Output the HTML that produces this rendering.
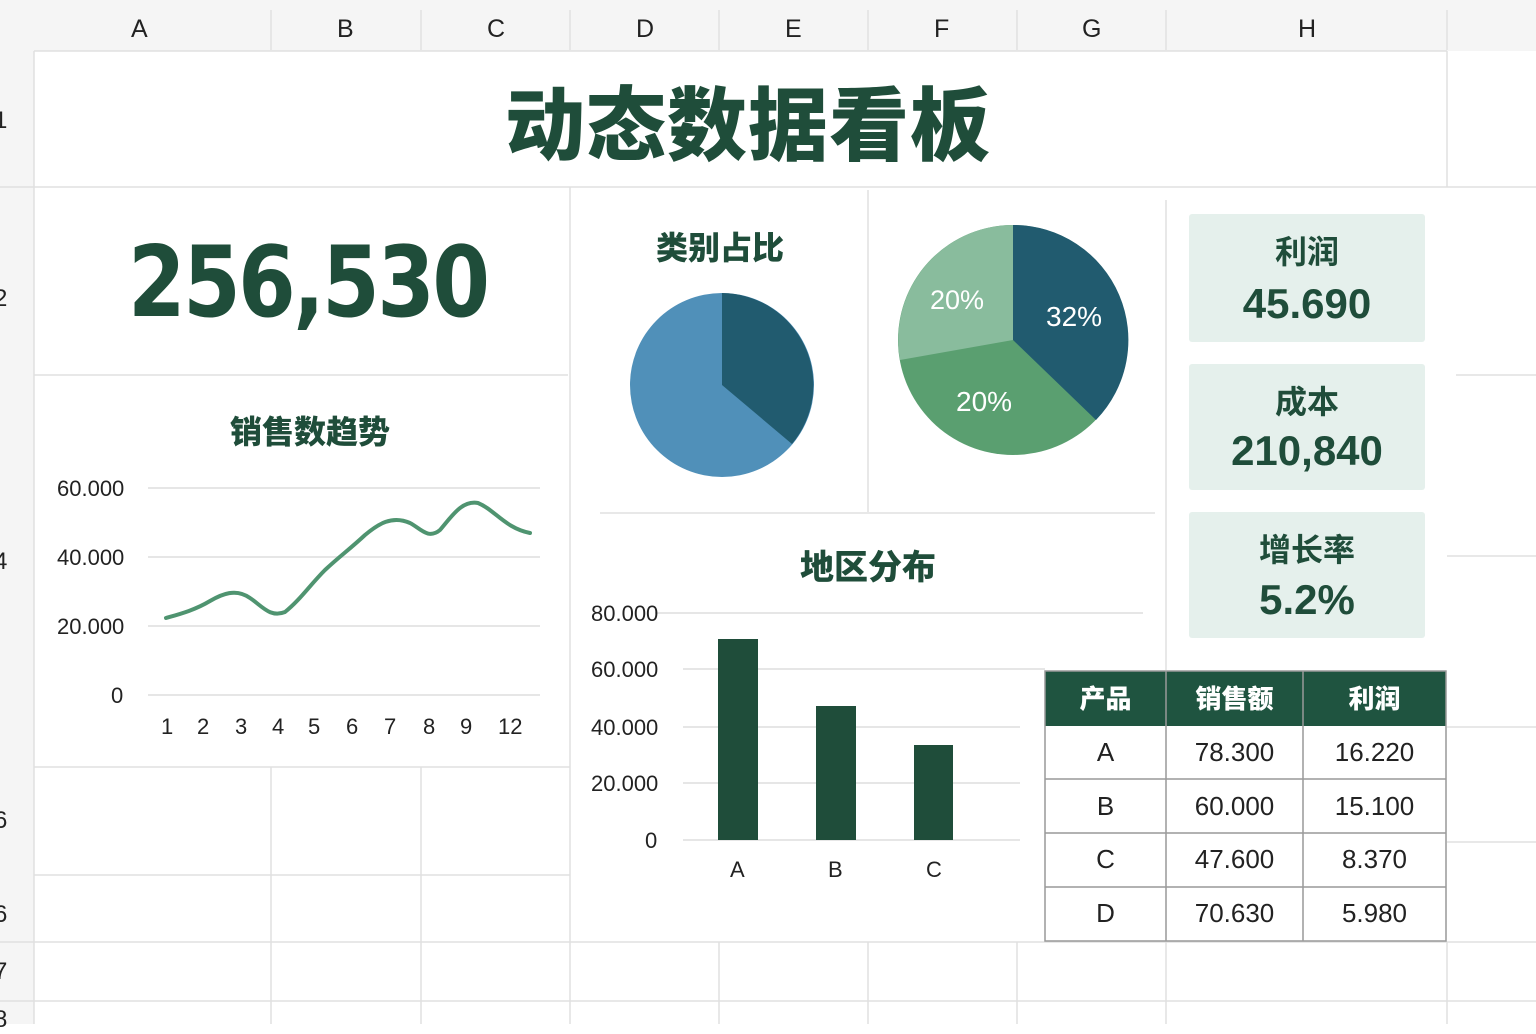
<!DOCTYPE html>
<html><head><meta charset="utf-8"><style>
body{margin:0;width:1536px;height:1024px;overflow:hidden;background:#fff;font-family:"Liberation Sans","Noto Sans CJK SC",sans-serif;position:relative}
.t{position:absolute;white-space:nowrap}
.cj{font-family:"Noto Sans CJK SC",sans-serif;font-weight:900;color:#1f4d3a}
.n{color:#222}
</style></head><body>
<svg width="1536" height="1024" style="position:absolute;left:0;top:0">
<rect x="0" y="0" width="1536" height="51" fill="#f5f5f5"/>
<rect x="0" y="0" width="34" height="1024" fill="#f5f5f5"/>
<g stroke="#e0e0e0" stroke-width="1.5">
<line x1="271" y1="10" x2="271" y2="50"/><line x1="421" y1="10" x2="421" y2="50"/><line x1="570" y1="10" x2="570" y2="50"/><line x1="719" y1="10" x2="719" y2="50"/><line x1="868" y1="10" x2="868" y2="50"/><line x1="1017" y1="10" x2="1017" y2="50"/><line x1="1166" y1="10" x2="1166" y2="50"/><line x1="1447" y1="10" x2="1447" y2="50"/>
<line x1="34" y1="51" x2="1447" y2="51"/>
<line x1="34" y1="51" x2="34" y2="1024"/>
<line x1="0" y1="187" x2="1536" y2="187"/>
<line x1="34" y1="375" x2="568" y2="375"/><line x1="1456" y1="375" x2="1536" y2="375"/>
<line x1="570" y1="187" x2="570" y2="1024"/>
<line x1="868" y1="190" x2="868" y2="512"/>
<line x1="1166" y1="200" x2="1166" y2="670"/>
<line x1="1447" y1="51" x2="1447" y2="187"/>
<line x1="600" y1="513" x2="1155" y2="513"/>
<line x1="34" y1="767" x2="570" y2="767"/>
<line x1="271" y1="767" x2="271" y2="1024"/><line x1="421" y1="767" x2="421" y2="1024"/>
<line x1="34" y1="875" x2="570" y2="875"/>
<line x1="0" y1="942" x2="1536" y2="942"/>
<line x1="0" y1="1001" x2="1536" y2="1001"/>
<line x1="719" y1="942" x2="719" y2="1024"/><line x1="868" y1="942" x2="868" y2="1024"/><line x1="1017" y1="942" x2="1017" y2="1024"/><line x1="1166" y1="942" x2="1166" y2="1024"/><line x1="1447" y1="942" x2="1447" y2="1024"/>
<line x1="1447" y1="556" x2="1536" y2="556"/><line x1="1447" y1="727" x2="1536" y2="727"/><line x1="1447" y1="842" x2="1536" y2="842"/>
</g>
<g stroke="#ddd" stroke-width="1.5">
<line x1="148" y1="488" x2="540" y2="488"/><line x1="148" y1="557" x2="540" y2="557"/><line x1="148" y1="626" x2="540" y2="626"/><line x1="148" y1="695" x2="540" y2="695"/>
<line x1="655" y1="613" x2="1143" y2="613"/><line x1="683" y1="669" x2="1045" y2="669"/><line x1="683" y1="727" x2="1020" y2="727"/><line x1="683" y1="783" x2="1020" y2="783"/><line x1="683" y1="840" x2="1020" y2="840"/>
</g>
<path d="M166,618 C180,614 195,610 210,601 C222,594 236,588 250,598 C262,606 270,618 285,612 C300,600 310,585 325,570 C340,556 350,549 365,535 C378,524 392,515 410,523 C420,528 428,540 440,530 C452,516 462,500 478,503 C495,510 505,528 530,533" fill="none" stroke="#4f9470" stroke-width="4" stroke-linecap="round"/>
<circle cx="722" cy="385" r="92" fill="#5090b9"/>
<path d="M722,385 L722,293 A92,92 0 0 1 792,444 Z" fill="#215b6f"/>
<circle cx="1013" cy="340" r="115" fill="#5a9f70"/>
<path d="M1013,340 L1013,225 A115,115 0 0 1 1096,420 Z" fill="#215b6f"/>
<path d="M1013,340 L900,360 A115,115 0 0 1 1013,225 Z" fill="#89bc9d"/>
<g fill="#1f4d3a"><rect x="718" y="639" width="40" height="201"/><rect x="816" y="706" width="40" height="134"/><rect x="914" y="745" width="39" height="95"/></g>
<g fill="#e5f0ec"><rect x="1189" y="214" width="236" height="128" rx="3"/><rect x="1189" y="364" width="236" height="126" rx="3"/><rect x="1189" y="512" width="236" height="126" rx="3"/></g>
<rect x="1045" y="671" width="401" height="55" fill="#1f5440"/>
<g stroke="#999" stroke-width="1.5" fill="none">
<rect x="1045" y="671" width="401" height="270"/>
<line x1="1045" y1="779" x2="1446" y2="779"/><line x1="1045" y1="833" x2="1446" y2="833"/><line x1="1045" y1="887" x2="1446" y2="887"/>
<line x1="1166" y1="671" x2="1166" y2="941"/><line x1="1303" y1="671" x2="1303" y2="941"/>
</g>
</svg>
<div class="t n" style="left:131px;top:15px;font-size:25px">A</div>
<div class="t n" style="left:337px;top:15px;font-size:25px">B</div>
<div class="t n" style="left:487px;top:15px;font-size:25px">C</div>
<div class="t n" style="left:636px;top:15px;font-size:25px">D</div>
<div class="t n" style="left:785px;top:15px;font-size:25px">E</div>
<div class="t n" style="left:934px;top:15px;font-size:25px">F</div>
<div class="t n" style="left:1082px;top:15px;font-size:25px">G</div>
<div class="t n" style="left:1298px;top:15px;font-size:25px">H</div>
<div class="t n" style="left:-6px;top:107px;font-size:24px">1</div>
<div class="t n" style="left:-6px;top:285px;font-size:24px">2</div>
<div class="t n" style="left:-6px;top:548px;font-size:24px">4</div>
<div class="t n" style="left:-6px;top:807px;font-size:24px">6</div>
<div class="t n" style="left:-6px;top:901px;font-size:24px">6</div>
<div class="t n" style="left:-6px;top:958px;font-size:24px">7</div>
<div class="t n" style="left:-6px;top:1006px;font-size:24px">8</div>
<div class="t cj" style="left:505px;top:70px;font-size:80px;letter-spacing:1px;line-height:100px">动态数据看板</div>
<div class="t" style="left:128px;top:228px;font-size:98px;font-weight:bold;color:#1f4d3a;font-family:'DejaVu Sans',sans-serif;letter-spacing:-3px;line-height:110px;transform:scaleX(0.845);transform-origin:left">256,530</div>
<div class="t cj" style="left:656px;top:226px;font-size:32px;line-height:40px">类别占比</div>
<div class="t cj" style="left:230px;top:410px;font-size:32px;line-height:40px">销售数趋势</div>
<div class="t cj" style="left:800px;top:544px;font-size:34px;line-height:42px">地区分布</div>
<div class="t" style="left:930px;top:285px;font-size:27px;color:#fff">20%</div>
<div class="t" style="left:1046px;top:301px;font-size:28px;color:#fff">32%</div>
<div class="t" style="left:956px;top:386px;font-size:28px;color:#fff">20%</div>
<div class="t n" style="left:57px;top:476px;font-size:22px">60.000</div>
<div class="t n" style="left:57px;top:545px;font-size:22px">40.000</div>
<div class="t n" style="left:57px;top:614px;font-size:22px">20.000</div>
<div class="t n" style="left:111px;top:683px;font-size:22px">0</div>
<div class="t n" style="left:161px;top:714px;font-size:22px">1</div>
<div class="t n" style="left:197px;top:714px;font-size:22px">2</div>
<div class="t n" style="left:235px;top:714px;font-size:22px">3</div>
<div class="t n" style="left:272px;top:714px;font-size:22px">4</div>
<div class="t n" style="left:308px;top:714px;font-size:22px">5</div>
<div class="t n" style="left:346px;top:714px;font-size:22px">6</div>
<div class="t n" style="left:384px;top:714px;font-size:22px">7</div>
<div class="t n" style="left:423px;top:714px;font-size:22px">8</div>
<div class="t n" style="left:460px;top:714px;font-size:22px">9</div>
<div class="t n" style="left:498px;top:714px;font-size:22px">12</div>
<div class="t n" style="left:591px;top:601px;font-size:22px">80.000</div>
<div class="t n" style="left:591px;top:657px;font-size:22px">60.000</div>
<div class="t n" style="left:591px;top:715px;font-size:22px">40.000</div>
<div class="t n" style="left:591px;top:771px;font-size:22px">20.000</div>
<div class="t n" style="left:645px;top:828px;font-size:22px">0</div>
<div class="t n" style="left:730px;top:857px;font-size:22px">A</div>
<div class="t n" style="left:828px;top:857px;font-size:22px">B</div>
<div class="t n" style="left:926px;top:857px;font-size:22px">C</div>
<div class="t cj" style="left:1189px;width:236px;text-align:center;top:230px;font-size:32px;font-weight:700;line-height:40px">利润</div>
<div class="t" style="left:1189px;width:236px;text-align:center;top:280px;font-size:42px;font-weight:bold;color:#1f4d3a">45.690</div>
<div class="t cj" style="left:1189px;width:236px;text-align:center;top:380px;font-size:32px;font-weight:700;line-height:40px">成本</div>
<div class="t" style="left:1189px;width:236px;text-align:center;top:427px;font-size:42px;font-weight:bold;color:#1f4d3a">210,840</div>
<div class="t cj" style="left:1189px;width:236px;text-align:center;top:528px;font-size:32px;font-weight:700;line-height:40px">增长率</div>
<div class="t" style="left:1189px;width:236px;text-align:center;top:576px;font-size:42px;font-weight:bold;color:#1f4d3a">5.2%</div>
<div class="t cj" style="left:1045px;width:121px;text-align:center;top:681px;font-size:26px;color:#fff;line-height:34px">产品</div>
<div class="t cj" style="left:1166px;width:137px;text-align:center;top:681px;font-size:26px;color:#fff;line-height:34px">销售额</div>
<div class="t cj" style="left:1303px;width:143px;text-align:center;top:681px;font-size:26px;color:#fff;line-height:34px">利润</div>
<div style="position:absolute;left:1045px;top:726px;font-size:26px;color:#222;line-height:53.7px">
<div style="display:flex"><span style="width:121px;text-align:center">A</span><span style="width:137px;text-align:center">78.300</span><span style="width:143px;text-align:center">16.220</span></div>
<div style="display:flex"><span style="width:121px;text-align:center">B</span><span style="width:137px;text-align:center">60.000</span><span style="width:143px;text-align:center">15.100</span></div>
<div style="display:flex"><span style="width:121px;text-align:center">C</span><span style="width:137px;text-align:center">47.600</span><span style="width:143px;text-align:center">8.370</span></div>
<div style="display:flex"><span style="width:121px;text-align:center">D</span><span style="width:137px;text-align:center">70.630</span><span style="width:143px;text-align:center">5.980</span></div>
</div>
</body></html>
